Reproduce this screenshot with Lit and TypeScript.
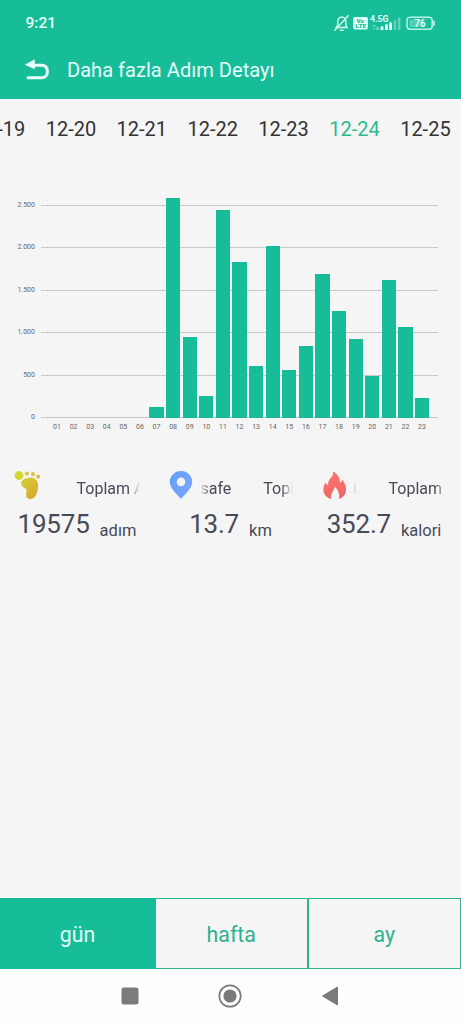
import { css, html, LitElement, svg } from 'lit';
import { customElement, property, state } from 'lit/decorators.js';
import { classMap } from 'lit/directives/class-map.js';
import { styleMap } from 'lit/directives/style-map.js';

const DATES = ['12-19', '12-20', '12-21', '12-22', '12-23', '12-24', '12-25'];

const STEPS = [
  0, 0, 0, 0, 0, 0, 135, 2590, 960, 260, 2450, 1840, 610, 2025, 570, 845, 1700,
  1257, 930, 492, 1630, 1075, 240,
];

const TICKS = ['2.500', '2.000', '1.500', '1.000', '500', '0'];

const TABS = ['gün', 'hafta', 'ay'];

const footIcon = svg`
  <svg width="30" height="32" viewBox="0 0 30 32">
    <defs>
      <linearGradient id="foot" x1="0" y1="0" x2="0.6" y2="1">
        <stop offset="0" stop-color="#d3cf3c" />
        <stop offset="1" stop-color="#d9ab28" />
      </linearGradient>
    </defs>
    <ellipse cx="6" cy="6.5" rx="4.5" ry="4.4" fill="#d2d934" />
    <ellipse cx="14" cy="4.6" rx="2.1" ry="2.1" fill="#d6cb4c" />
    <ellipse cx="20" cy="5.2" rx="2" ry="2.1" fill="#d6c24c" />
    <ellipse cx="25.2" cy="7.6" rx="2" ry="2.2" fill="#d8bf50" />
    <path fill="url(#foot)" d="M15.8 8.7C20.5 7.6 24.3 10.4 25 15C25.5 18.4 24.7 21.6 23.6 24.6C22.4 28 20.8 30 17.8 30C14.4 30 12.6 27.8 13.2 24.4C13.6 22.2 14 20.4 12.4 19.6C10.6 18.6 8.4 17.6 8.2 14.5C8 11 11.2 9.7 15.8 8.7Z" />
  </svg>`;

const pinIcon = svg`
  <svg width="30" height="32" viewBox="0 0 30 32">
    <defs>
      <linearGradient id="pin" x1="0" y1="0" x2="1" y2="1">
        <stop offset="0" stop-color="#62a0f6" />
        <stop offset="1" stop-color="#7ba7ff" />
      </linearGradient>
    </defs>
    <path fill="url(#pin)" fill-rule="evenodd" d="M15 2C8.7 2 3.8 6.8 3.8 12.8C3.8 19.5 10 24 15 30C20 24 26.2 19.5 26.2 12.8C26.2 6.8 21.3 2 15 2ZM15 8.6A4.3 4.3 0 1 1 15 17.2A4.3 4.3 0 1 1 15 8.6Z" />
  </svg>`;

const flameIcon = svg`
  <svg width="30" height="32" viewBox="0 0 30 32">
    <defs>
      <linearGradient id="flame" x1="0" y1="0" x2="0.3" y2="1">
        <stop offset="0" stop-color="#fb7a6c" />
        <stop offset="1" stop-color="#f26468" />
      </linearGradient>
    </defs>
    <path fill="url(#flame)" d="M13 2.5C17.5 4.5 20.2 9 20 14C21.3 13.2 22 12 22.1 10.5C25 14 26.4 18 26 21.5C25.4 26 22.7 29 18.9 30C20 26 18.8 22 15 17.6C14.4 21.5 10.2 24 11.2 30C6.7 29 3.6 25.3 3.4 21C3.2 17.5 4.4 15.2 5.6 13.4C6.3 15 7.1 16 8.2 16.3C7.8 12.7 9 10.5 11.2 8.3C12.8 6.6 13.3 5 13 2.5Z" />
  </svg>`;

@customElement('status-bar')
export class StatusBar extends LitElement {
  static styles = css`
    :host {
      display: flex;
      align-items: center;
      height: 42px;
      padding: 4px 24px 0 25.5px;
      box-sizing: border-box;
      color: #e4fff8;
    }

    .time {
      flex: 1;
      font-size: 15.5px;
      font-weight: 500;
    }

    svg {
      display: block;
    }
  `;

  protected render(): unknown {
    return html`
      <span class="time">9:21</span>
      <svg width="104" height="20" viewBox="0 0 104 20" fill="none">
        <g stroke="#d3f8ee" stroke-width="1.5" stroke-linecap="round">
          <path d="M3 14.6H14.2L12.8 12.4V8.4C12.8 6 11.2 4 8.8 4C6.4 4 4.7 6 4.7 8.4V12.4Z" stroke-linejoin="round" />
          <path d="M7.4 17.2H10.2M1.8 17.2L15.2 2.8" />
        </g>
        <rect x="20.2" y="4" width="14.8" height="12.6" rx="2" fill="#dcfff6" />
        <g fill="#17bc99" font-family="Roboto, sans-serif" font-weight="900" font-size="6">
          <text x="23.6" y="9.7" textLength="7.5" lengthAdjust="spacingAndGlyphs">Vo</text>
          <text x="22.6" y="15.4" textLength="10.5" lengthAdjust="spacingAndGlyphs">LTE</text>
        </g>
        <text x="37" y="9" fill="#e6fff9" font-family="Roboto, sans-serif" font-weight="700" font-size="8.4" textLength="18.5" lengthAdjust="spacingAndGlyphs">4.5G</text>
        <g fill="#e6fff9">
          <path opacity="0.35" d="M39 12h4v1h-1.4v4h-1.1v-4H39Z" />
          <rect x="43.5" y="14" width="2" height="3" opacity="0.5" />
          <rect x="47.6" y="13.4" width="2.8" height="3.6" />
          <rect x="52" y="11.4" width="2.8" height="5.6" />
          <rect x="56.2" y="9.4" width="2.8" height="7.6" />
          <rect x="60.6" y="7" width="2.6" height="10" opacity="0.35" />
          <rect x="64.8" y="4.6" width="2.6" height="12.4" opacity="0.35" />
        </g>
        <rect x="74" y="4.2" width="25.2" height="12" rx="3.2" stroke="#b9f3e4" stroke-width="1.5" />
        <rect x="76.3" y="6.4" width="14.5" height="7.6" rx="1" fill="#8fe3cf" opacity="0.5" />
        <path d="M101 8.4V12" stroke="#b9f3e4" stroke-width="1.8" stroke-linecap="round" />
        <text x="81.2" y="13.8" fill="#e9fffa" font-family="Roboto, sans-serif" font-weight="500" font-size="10" textLength="11.5">76</text>
      </svg>
    `;
  }
}

@customElement('step-chart')
export class StepChart extends LitElement {
  @property({ type: Array }) values: number[] = [];

  @property({ type: Number }) max = 2500;

  static styles = css`
    :host {
      display: grid;
      grid-template-columns: 35px 397px;
      grid-template-rows: 212px 18px;
      column-gap: 6px;
      font-size: 7px;
      color: #666;
    }

    .ticks,
    .lines {
      display: flex;
      flex-direction: column;
      justify-content: space-between;
    }

    .ticks {
      margin: -6px 0;
      text-align: right;
      line-height: 12px;
    }

    .lines,
    .bars {
      grid-column: 2;
      grid-row: 1;
    }

    .lines {
      margin-bottom: -1px;
    }

    .line {
      height: 1px;
      background: repeating-linear-gradient(90deg, #c4c4c4 0 3px, #d6d6d6 3px 4px);
    }

    .bars,
    .hours {
      display: grid;
      grid-template-columns: repeat(23, 1fr);
      padding: 0 7.7px;
    }

    .bars {
      align-items: end;
      margin: 1px 0 -1px;
      z-index: 1;
    }

    .bar {
      margin: 0 1.2px;
      background: #17bc99;
    }

    .hours {
      grid-column: 2;
      text-align: center;
      line-height: 20px;
    }
  `;

  protected render(): unknown {
    return html`
      <div class="ticks">${TICKS.map((tick) => html`<span>${tick}</span>`)}</div>
      <div class="lines">${TICKS.map(() => html`<div class="line"></div>`)}</div>
      <div class="bars">
        ${this.values.map(
          (value) => html`<div
            class="bar"
            style=${styleMap({ height: `${(value / this.max) * 100}%` })}
          ></div>`
        )}
      </div>
      <div class="hours">
        ${this.values.map(
          (_, i) => html`<span>${String(i + 1).padStart(2, '0')}</span>`
        )}
      </div>
    `;
  }
}

@customElement('total-item')
export class TotalItem extends LitElement {
  @property() label = '';

  @property() value = '';

  @property() unit = '';

  // How far the label has scrolled inside its window, in px
  @property({ type: Number }) scroll = 0;

  static styles = css`
    :host {
      display: block;
      color: #484a58;
    }

    .head {
      display: flex;
      height: 37px;
    }

    .marquee {
      width: 94px;
      margin-left: 3px;
      padding-top: 10px;
      overflow: hidden;
      white-space: nowrap;
      font-size: 16px;
      line-height: 20px;
      -webkit-mask-image: linear-gradient(90deg, transparent, #000 12px calc(100% - 12px), transparent);
      mask-image: linear-gradient(90deg, transparent, #000 12px calc(100% - 12px), transparent);
    }

    .track {
      display: flex;
      gap: 32px;
    }

    .total {
      display: flex;
      justify-content: center;
      align-items: baseline;
      gap: 10px;
      width: 129px;
      line-height: 36px;
    }

    .value {
      font-size: 26px;
      letter-spacing: -0.2px;
    }

    .unit {
      font-size: 16.5px;
      position: relative;
      top: 3px;
    }
  `;

  protected render(): unknown {
    return html`
      <div class="head">
        <slot></slot>
        <div class="marquee">
          <div class="track" style=${styleMap({ marginLeft: `${-this.scroll}px` })}>
            <span>${this.label}</span><span>${this.label}</span>
          </div>
        </div>
      </div>
      <div class="total">
        <span class="value">${this.value}</span>
        <span class="unit">${this.unit}</span>
      </div>
    `;
  }
}

@customElement('app-root')
export class AppRoot extends LitElement {
  @state() private date = '12-24';

  @state() private tab = 'gün';

  static styles = css`
    :host {
      display: flex;
      flex-direction: column;
      width: 461px;
      height: 1024px;
      overflow: hidden;
      background: #f5f5f5;
      font-family: Roboto, sans-serif;
    }

    header {
      height: 99px;
      background: #17bc99;
    }

    .title {
      display: flex;
      align-items: center;
      gap: 17px;
      height: 56px;
      padding-left: 24px;
      color: #e6fff9;
      font-size: 20.1px;
      white-space: nowrap;
    }

    .dates {
      display: grid;
      grid-template-columns: repeat(7, 70.9px);
      margin-left: -35.4px;
      height: 60px;
      line-height: 60px;
      font-size: 20px;
      text-align: center;
      color: #333;
    }

    .dates .active {
      color: #2cba91;
    }

    step-chart {
      margin-top: 46px;
    }

    .totals {
      display: grid;
      grid-template-columns: 153.5px 153.5px 1fr;
      padding: 34px 0 0 12.5px;
    }

    .tabs {
      display: grid;
      grid-template-columns: 155px 152.5px 153.5px;
      height: 71px;
      margin-top: auto;
    }

    .tab {
      display: flex;
      align-items: center;
      justify-content: center;
      border: 1.5px solid #2fb390;
      padding-top: 2px;
      font-size: 21.3px;
      color: #2cb28e;
    }

    .tab.active {
      background: #17bc99;
      border-color: #17bc99;
      color: #e6fff9;
    }

    nav {
      display: flex;
      justify-content: center;
      gap: 76px;
      height: 55px;
      padding: 15px 2px 0 0;
      box-sizing: border-box;
      background: #fefefe;
    }
  `;

  protected render(): unknown {
    return html`
      <header>
        <status-bar></status-bar>
        <div class="title">
          <svg width="26" height="22" viewBox="0 0 26 22" fill="none">
            <path d="M9 6.2H17.5C21.3 6.2 23.4 8.7 23.4 12.4C23.4 16.2 21.3 18.8 17.5 18.8H4" stroke="#e6fff9" stroke-width="3" stroke-linecap="round" />
            <path d="M0.8 5.7L10.8 0.3V10.2Z" fill="#e6fff9" />
          </svg>
          <span>Daha fazla Adım Detayı</span>
        </div>
      </header>
      <div class="dates">
        ${DATES.map(
          (date) => html`<span
            class=${classMap({ active: date === this.date })}
            @click=${() => (this.date = date)}
            >${date}</span
          >`
        )}
      </div>
      <step-chart .values=${STEPS}></step-chart>
      <div class="totals">
        <total-item label="Toplam Adım" value="19575" unit="adım" .scroll=${-31}>${footIcon}</total-item>
        <total-item label="Toplam Mesafe" value="13.7" unit="km" .scroll=${78.5}>${pinIcon}</total-item>
        <total-item label="Toplam Kalori" value="352.7" unit="kalori" .scroll=${94.5}>${flameIcon}</total-item>
      </div>
      <div class="tabs">
        ${TABS.map(
          (tab) => html`<div
            class=${classMap({ tab: true, active: tab === this.tab })}
            @click=${() => (this.tab = tab)}
          >
            ${tab}
          </div>`
        )}
      </div>
      <nav>
        <svg width="24" height="24" viewBox="0 0 24 24">
          <rect x="3.5" y="3.5" width="17" height="17" rx="2.5" fill="#7b7b7b" />
        </svg>
        <svg width="24" height="24" viewBox="0 0 24 24">
          <circle cx="12" cy="12" r="10.7" fill="none" stroke="#7b7b7b" stroke-width="1.7" />
          <circle cx="12" cy="12" r="6.6" fill="#7b7b7b" />
        </svg>
        <svg width="24" height="24" viewBox="0 0 24 24">
          <path d="M4.5 12L19.5 3V21Z" fill="#7b7b7b" stroke="#7b7b7b" stroke-linejoin="round" />
        </svg>
      </nav>
    `;
  }
}
